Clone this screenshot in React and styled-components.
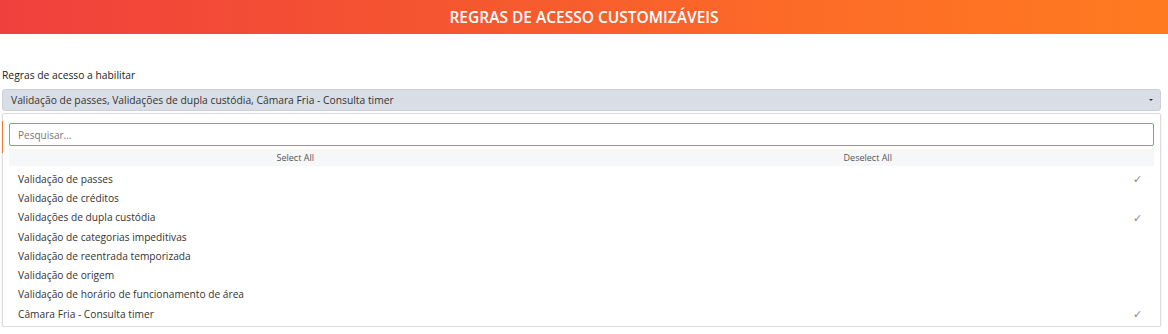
import React from 'react';
import styled, { createGlobalStyle } from 'styled-components';

const GlobalStyle = createGlobalStyle`
  body {
    margin: 0;
    padding: 0;
    font-family: 'Open Sans', 'Liberation Sans', sans-serif;
    background-color: #fff;
    color: #333;
  }
`;

const rules = [
  { label: 'Validação de passes', checked: true },
  { label: 'Validação de créditos', checked: false },
  { label: 'Validações de dupla custódia', checked: true },
  { label: 'Validação de categorias impeditivas', checked: false },
  { label: 'Validação de reentrada temporizada', checked: false },
  { label: 'Validação de origem', checked: false },
  { label: 'Validação de horário de funcionamento de área', checked: false },
  { label: 'Câmara Fria - Consulta timer', checked: true },
];

const App = () => {
  const selected = rules.filter(r => r.checked).map(r => r.label).join(', ');
  return (
    <>
      <GlobalStyle />
      <Header>REGRAS DE ACESSO CUSTOMIZÁVEIS</Header>
      <Content>
        <Label>Regras de acesso a habilitar</Label>
        <SelectBox>
          <SelectText>{selected}</SelectText>
          <Caret />
        </SelectBox>
        <Dropdown>
          <OrangeMark />
          <Search placeholder="Pesquisar..." />
          <ActionsRow>
            <Action>Select All</Action>
            <Action>Deselect All</Action>
          </ActionsRow>
          <List>
            {rules.map(r => (
              <Item key={r.label}>
                <span>{r.label}</span>
                {r.checked && <Check>✓</Check>}
              </Item>
            ))}
          </List>
        </Dropdown>
      </Content>
    </>
  );
};

const Header = styled.div`
  height: 34px;
  display: flex;
  align-items: center;
  justify-content: center;
  background: linear-gradient(90deg, #f0403d 0%, #f5572f 40%, #fd6c27 70%, #ff7a20 100%);
  color: #fff;
  font-family: 'Open Sans', sans-serif;
  font-weight: 600;
  font-size: 15.5px;
  letter-spacing: 0;
`;

const Content = styled.div`
  padding: 35px 7px 0 2px;
  display: flex;
  flex-direction: column;
`;

const Label = styled.div`
  font-size: 10.3px;
  color: #222;
  height: 20px;
  line-height: 13px;
`;

const SelectBox = styled.div`
  height: 22px;
  box-sizing: border-box;
  background: #d9dee6;
  border: 1px solid #ccd1d9;
  border-radius: 3px;
  display: flex;
  align-items: center;
  justify-content: space-between;
  padding: 0 7px 0 8px;
`;

const SelectText = styled.span`
  font-size: 10.3px;
  color: #333;
`;

const Caret = styled.span`
  width: 0;
  height: 0;
  border-left: 2px solid transparent;
  border-right: 2px solid transparent;
  border-top: 2.5px solid #333;
`;

const Dropdown = styled.div`
  position: relative;
  margin-top: 2px;
  height: 214px;
  box-sizing: border-box;
  border: 1px solid #dcdcdc;
  border-radius: 2px;
  box-shadow: 0 1px 2px rgba(0, 0, 0, 0.12);
  padding: 9px 6px 0 6px;
  display: flex;
  flex-direction: column;
`;

const OrangeMark = styled.div`
  position: absolute;
  left: -1px;
  top: 7px;
  width: 1px;
  height: 32px;
  background: #f07a30;
`;

const Search = styled.input`
  height: 23px;
  box-sizing: border-box;
  border: 1px solid #6fb46a;
  border-radius: 2px;
  padding: 0 8px;
  font-family: inherit;
  font-size: 10px;
  color: #333;
  outline: none;
  &::placeholder {
    color: #777;
  }
`;

const ActionsRow = styled.div`
  margin-top: 3px;
  height: 17px;
  background: #f6f7f9;
  display: grid;
  grid-template-columns: 1fr 1fr;
  align-items: center;
`;

const Action = styled.div`
  text-align: center;
  font-size: 9px;
  color: #555;
`;

const List = styled.div`
  padding-top: 3px;
  display: flex;
  flex-direction: column;
`;

const Item = styled.div`
  height: 19.3px;
  display: flex;
  align-items: center;
  justify-content: space-between;
  padding: 0 12px 0 9px;
  font-size: 10.2px;
  color: #333;
`;

const Check = styled.span`
  font-size: 11px;
  font-weight: 300;
  color: #888;
`;

export default App;
